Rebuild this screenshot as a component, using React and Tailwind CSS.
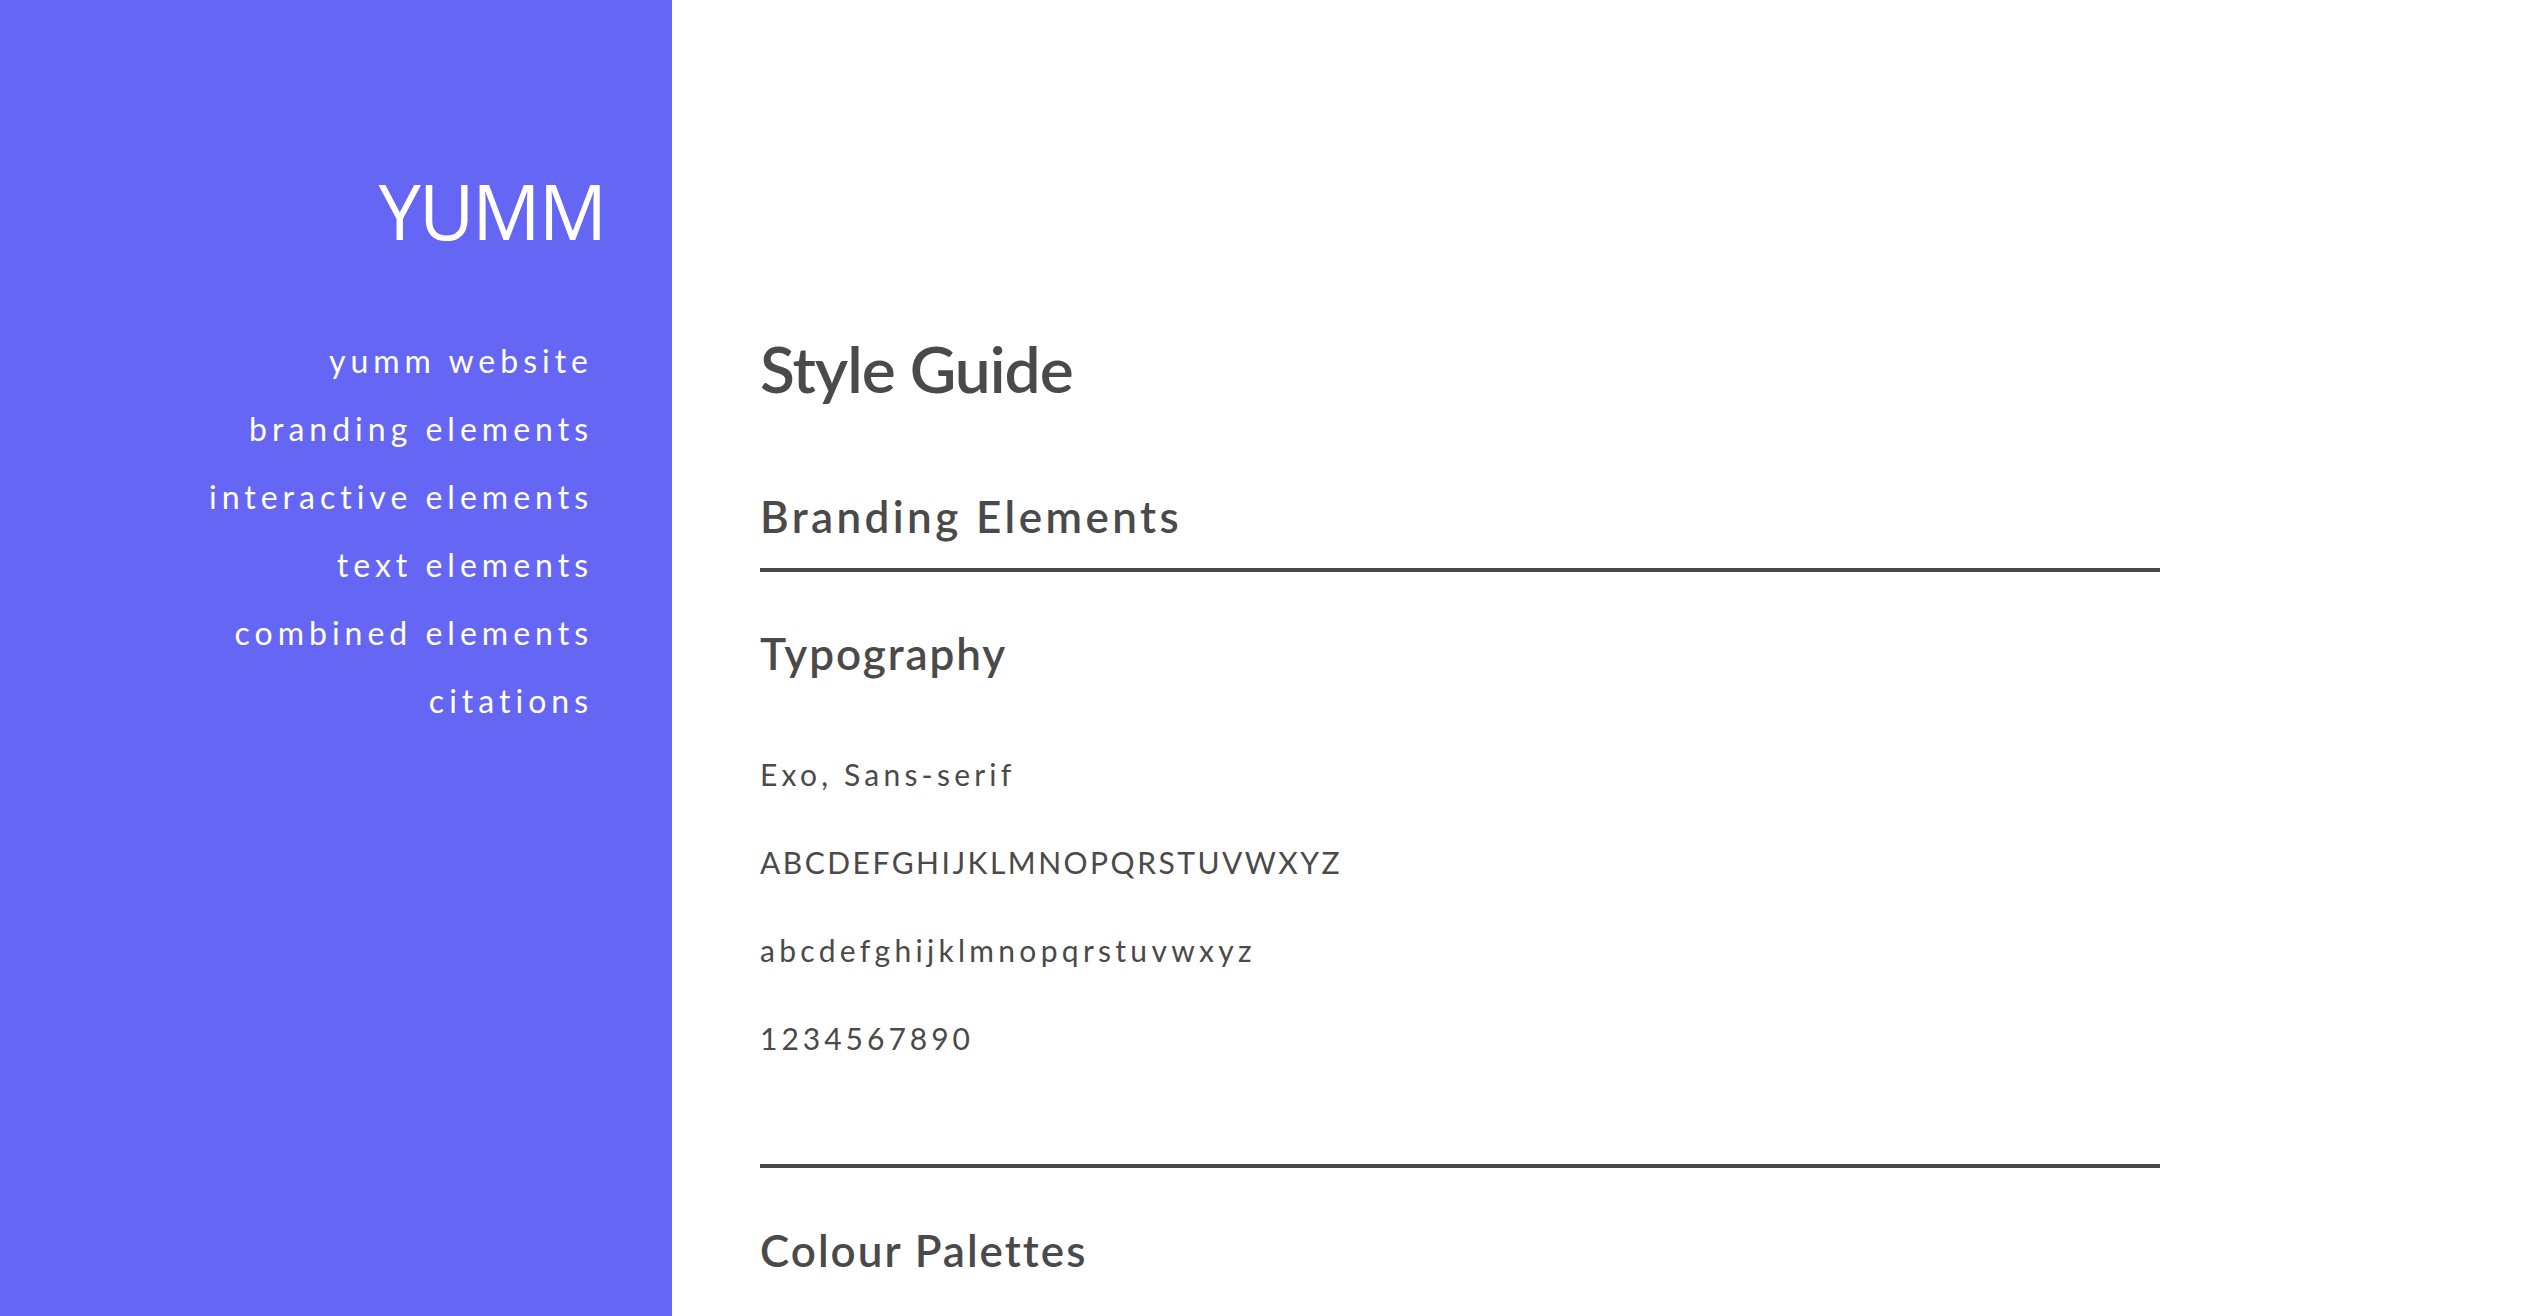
import React from 'react';

const navLinks = [
  'yumm website',
  'branding elements',
  'interactive elements',
  'text elements',
  'combined elements',
  'citations',
];

function Sidebar() {
  return (
    <aside className="w-[672px] shrink-0 h-screen bg-[#6666f5] text-white flex flex-col items-end">
      <h1 className="mt-[165px] mr-[67px] text-[76px] leading-[92px] tracking-[-2px] font-['Open_Sans',sans-serif]">
        YUMM
      </h1>
      <nav className="mt-[70px] mr-[79px] flex flex-col items-end">
        {navLinks.map((link) => (
          <a
            key={link}
            href="#"
            className="text-[32px] leading-[68px] tracking-[5px] font-['Lato',sans-serif]"
          >
            {link}
          </a>
        ))}
      </nav>
    </aside>
  );
}

function Main() {
  return (
    <main className="flex-1 h-screen overflow-hidden pl-[88px] text-[#4a4a4a] font-['Lato',sans-serif]">
      <div className="w-[1400px]">
        <h2 className="mt-[331px] text-[64px] leading-[76px] tracking-[-1px] font-semibold">Style Guide</h2>

        {/* Branding Elements */}
        <h3 className="mt-[81px] text-[44px] leading-[56px] tracking-[3.4px] font-semibold">Branding Elements</h3>
        <hr className="mt-[24px] border-0 h-[4px] bg-[#4a4a4a]" />

        <h4 className="mt-[53px] text-[44px] leading-[56px] tracking-[1.9px] font-semibold">Typography</h4>
        <div className="mt-[75px] flex flex-col gap-[52px] text-[30px] leading-[36px]">
          <p className="tracking-[4.2px]">Exo, Sans-serif</p>
          <p className="tracking-[2.5px]">ABCDEFGHIJKLMNOPQRSTUVWXYZ</p>
          <p className="tracking-[4.3px]">abcdefghijklmnopqrstuvwxyz</p>
          <p className="tracking-[4px]">1234567890</p>
        </div>
        <hr className="mt-[108px] border-0 h-[4px] bg-[#4a4a4a]" />

        <h4 className="mt-[54px] text-[44px] leading-[56px] tracking-[2px] font-semibold">Colour Palettes</h4>
      </div>
    </main>
  );
}

export default function App() {
  return (
    <div className="flex w-full h-screen overflow-hidden bg-white">
      <Sidebar />
      <Main />
    </div>
  );
}
